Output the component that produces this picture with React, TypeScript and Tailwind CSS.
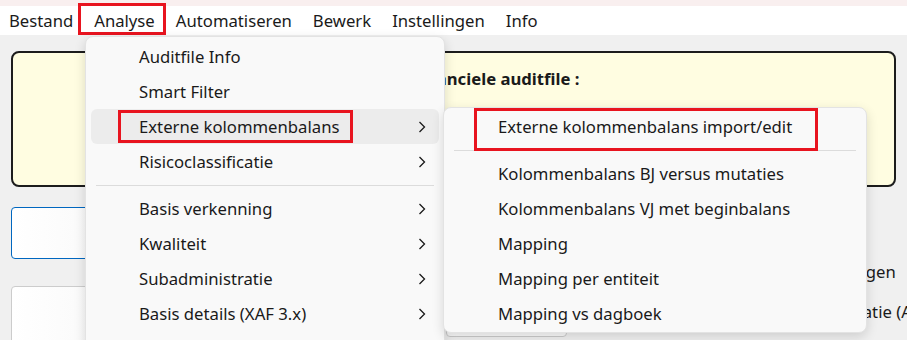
import React from 'react';

type MenuItem = { label: string; submenu?: boolean; active?: boolean } | 'sep';

const topMenu = ['Bestand', 'Analyse', 'Automatiseren', 'Bewerk', 'Instellingen', 'Info'];

const analyseItems: MenuItem[] = [
  { label: 'Auditfile Info' },
  { label: 'Smart Filter' },
  { label: 'Externe kolommenbalans', submenu: true, active: true },
  { label: 'Risicoclassificatie', submenu: true },
  'sep',
  { label: 'Basis verkenning', submenu: true },
  { label: 'Kwaliteit', submenu: true },
  { label: 'Subadministratie', submenu: true },
  { label: 'Basis details (XAF 3.x)', submenu: true },
];

const kolommenItems: MenuItem[] = [
  { label: 'Externe kolommenbalans import/edit' },
  'sep',
  { label: 'Kolommenbalans BJ versus mutaties' },
  { label: 'Kolommenbalans VJ met beginbalans' },
  { label: 'Mapping' },
  { label: 'Mapping per entiteit' },
  { label: 'Mapping vs dagboek' },
];

function Chevron() {
  return (
    <svg width="8" height="12" viewBox="0 0 8 12" className="shrink-0">
      <path d="M1.5 1 L6.5 6 L1.5 11" fill="none" stroke="#1a1a1a" strokeWidth="1.3" />
    </svg>
  );
}

function MenuList({ items, textPad }: { items: MenuItem[]; textPad: string }) {
  return (
    <>
      {items.map((item, i) =>
        item === 'sep' ? (
          <div key={i} className="flex h-[12px] items-center px-[10px]">
            <div className="h-px w-full bg-[#dcdcdc]" />
          </div>
        ) : (
          <div
            key={i}
            className={`mx-[5px] flex h-[35px] items-center rounded-md pr-[13px] ${textPad} ${
              item.active ? 'bg-[#ececec]' : ''
            }`}
          >
            <span className="flex-1 whitespace-nowrap">{item.label}</span>
            {item.submenu && <Chevron />}
          </div>
        )
      )}
    </>
  );
}

export default function App() {
  return (
    <div className="relative h-[340px] w-[907px] overflow-hidden bg-[#f0f0f0] font-['Noto_Sans',sans-serif] text-[16.7px] text-[#1a1a1a]">
      <div className="h-[6px] bg-[#f9efef]" />

      <nav className="flex h-[29px] items-center gap-[21px] bg-white pl-[9px]">
        {topMenu.map((m) => (
          <span key={m} className="whitespace-nowrap">
            {m}
          </span>
        ))}
      </nav>

      <main className="px-[11px] pt-[16px]">
        <div className="h-[136px] rounded-lg border-2 border-[#1c1c1c] bg-[#fffde1] pl-[307px] pt-[13px]">
          <p className="font-bold">Informatie financiele auditfile :</p>
        </div>

        <div className="mt-[20px] flex">
          <div className="flex w-[160px] shrink-0 flex-col">
            <div className="h-[52px] rounded border-[1.5px] border-[#0067c0] bg-gradient-to-r from-white to-[#f5f5f5]" />
            <div className="mt-[27px] h-[60px] rounded border border-[#cccccc] bg-gradient-to-r from-white to-[#f5f5f5]" />
          </div>
          <div className="ml-[275px] shrink-0 pt-[95px]">
            <div className="h-[35px] w-[121px] rounded border border-[#cccccc] bg-[#fbfbfb]" />
          </div>
          <div className="ml-[175px] flex shrink-0 flex-col gap-[15px] pt-[52px] whitespace-nowrap">
            <span>Dubbele boekingen</span>
            <span>Memoriaal mutatie (AF)</span>
          </div>
        </div>
      </main>

      {/* selected top menu item */}
      <div className="absolute left-[78px] top-[3px] h-[32px] w-[88px] border-[3px] border-[#e8141f]" />

      {/* Analyse dropdown */}
      <div className="absolute left-[85px] top-[36px] w-[360px] rounded-tl-lg rounded-tr-lg border border-[#e3e3e3] bg-[#f9f9f9] pb-[20px] pt-[2px] shadow-[0_4px_12px_rgba(0,0,0,0.14)]">
        <MenuList items={analyseItems} textPad="pl-[48px]" />
      </div>
      <div className="absolute left-[118px] top-[110px] h-[33px] w-[235px] border-[3px] border-[#e8141f]" />

      {/* Externe kolommenbalans submenu */}
      <div className="absolute left-[443px] top-[107px] w-[424px] rounded-lg border border-[#e3e3e3] bg-[#f9f9f9] pb-[1px] pt-[1px] shadow-[0_4px_12px_rgba(0,0,0,0.14)]">
        <MenuList items={kolommenItems} textPad="pl-[49px]" />
      </div>
      <div className="absolute left-[474px] top-[108px] h-[43px] w-[344px] border-[3px] border-[#e8141f]" />
    </div>
  );
}
